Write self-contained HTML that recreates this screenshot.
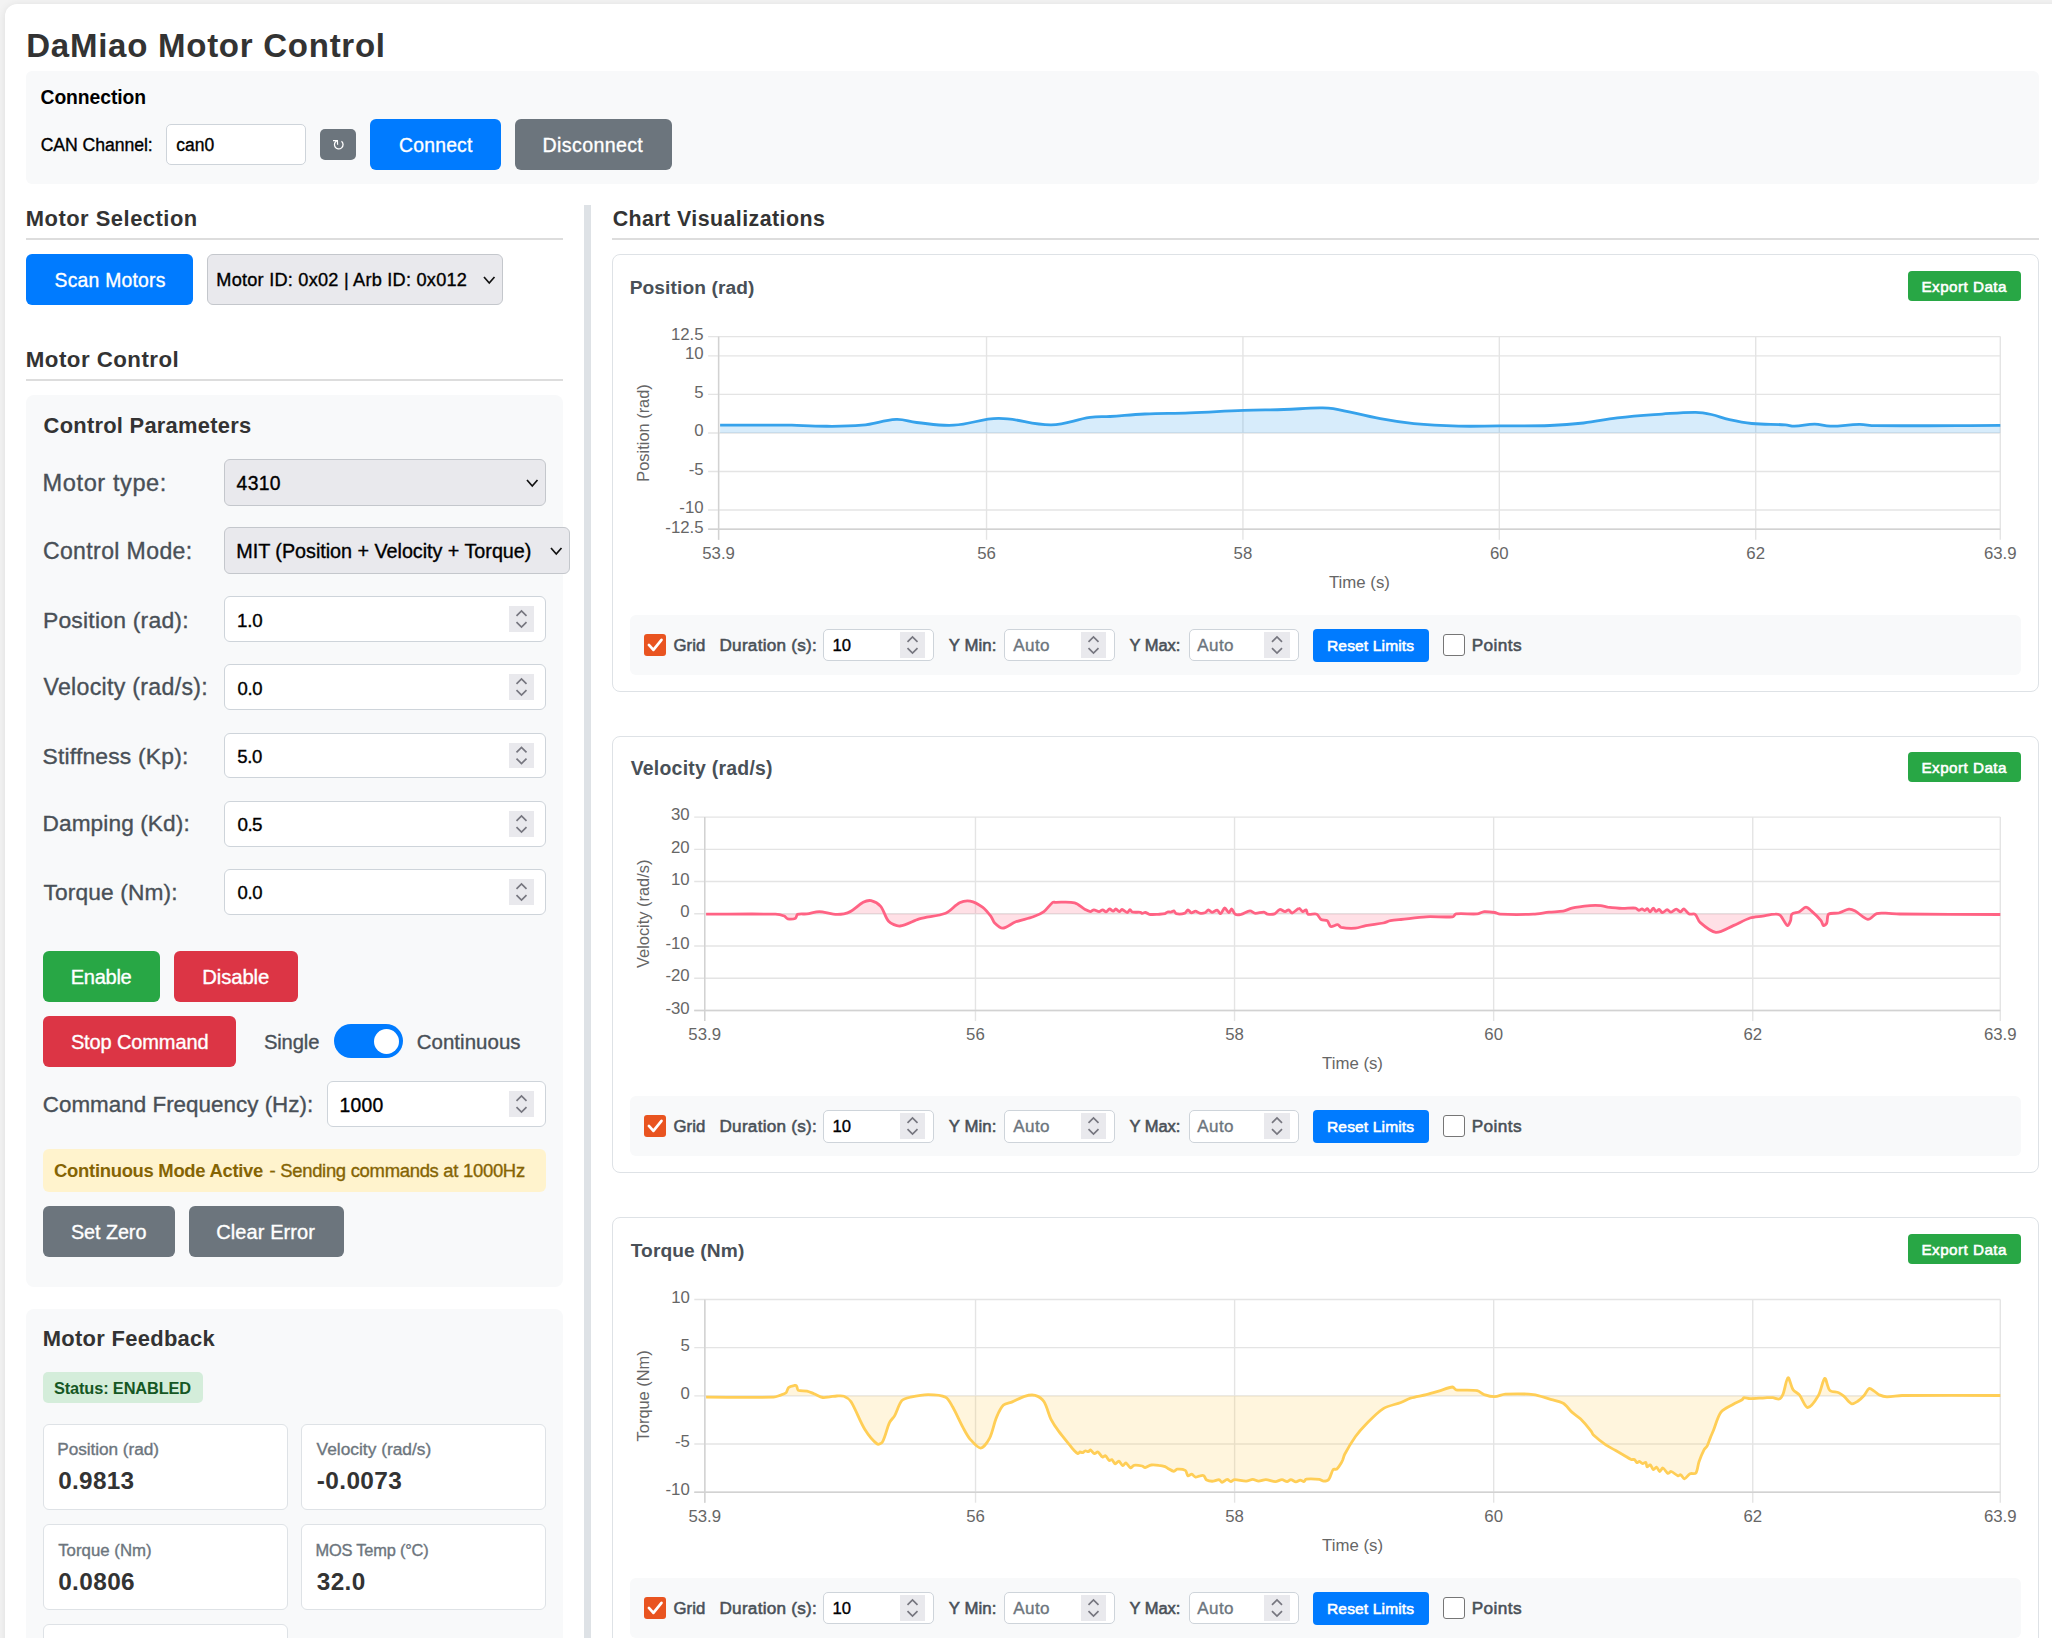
<!DOCTYPE html>
<html><head><meta charset="utf-8"><title>DaMiao Motor Control</title>
<style>
html,body{margin:0;padding:0;width:2052px;height:1638px;overflow:hidden;background:#f3f3f3;font-family:"Liberation Sans",sans-serif}
.a{position:absolute;box-sizing:border-box}
.t{position:absolute;white-space:nowrap;line-height:1}
.t.n{-webkit-text-stroke:0.35px currentColor}
.t.m{-webkit-text-stroke:0.55px currentColor}
</style></head><body>
<div class="a" style="left:5px;top:4px;width:2195.00px;height:1796.00px;background:#fff;border-radius:12px;box-shadow:0 1px 8px rgba(0,0,0,.09)"></div>
<div class="a" style="left:26px;top:71px;width:2013.00px;height:113.00px;background:#f8f9fa;border-radius:6px"></div>
<div class="a" style="left:166px;top:124px;width:140.00px;height:41.00px;background:#fff;border:1px solid #ced4da;border-radius:5px"></div>
<div class="a" style="left:320px;top:129px;width:36.00px;height:31.00px;background:#6c757d;border-radius:5px"></div>
<svg class="a" style="left:320px;top:129px" width="36" height="31" viewBox="0 0 36 31"><path d="M21.5 12.3 A4.3 4.3 0 1 1 17.2 11.6" fill="none" stroke="#fff" stroke-width="1.3"/><path d="M13.0 11.6 L17.4 11.6 L17.6 15.8" fill="none" stroke="#fff" stroke-width="1.2"/></svg>
<div class="a" style="left:370px;top:119px;width:131.00px;height:51.00px;background:#007bff;border-radius:6px"></div>
<div class="a" style="left:515px;top:119px;width:157.00px;height:51.00px;background:#6c757d;border-radius:6px"></div>
<div class="a" style="left:26px;top:238px;width:537.00px;height:2.00px;background:#dddddd"></div>
<div class="a" style="left:26px;top:254px;width:167.00px;height:51.00px;background:#007bff;border-radius:6px"></div>
<div class="a" style="left:207px;top:254px;width:296.00px;height:51.00px;background:#e9e9ed;border:1px solid #c4c7cc;border-radius:6px"></div>
<svg class="a" style="left:482.25px;top:274.50px" width="14.5" height="10"><path d="M2 2 L7.25 8 L12.5 2" fill="none" stroke="#111" stroke-width="1.7"/></svg>
<div class="a" style="left:584px;top:205px;width:7.00px;height:1495.00px;background:#dee2e6"></div>
<div class="a" style="left:26px;top:379px;width:537.00px;height:2.00px;background:#dddddd"></div>
<div class="a" style="left:26px;top:395px;width:537.00px;height:892.00px;background:#f8f9fa;border-radius:8px"></div>
<div class="a" style="left:224px;top:459px;width:322.00px;height:47.00px;background:#e9e9ed;border:1px solid #c4c7cc;border-radius:6px"></div>
<svg class="a" style="left:525.25px;top:478.00px" width="14.5" height="10"><path d="M2 2 L7.25 8 L12.5 2" fill="none" stroke="#111" stroke-width="1.7"/></svg>
<div class="a" style="left:224px;top:527px;width:346.00px;height:47.00px;background:#e9e9ed;border:1px solid #c4c7cc;border-radius:6px"></div>
<svg class="a" style="left:549.25px;top:546.00px" width="14.5" height="10"><path d="M2 2 L7.25 8 L12.5 2" fill="none" stroke="#111" stroke-width="1.7"/></svg>
<div class="a" style="left:224px;top:596px;width:322.00px;height:46.00px;background:#fff;border:1px solid #ced4da;border-radius:6px"></div>
<div class="a" style="left:509px;top:606px;width:25.00px;height:26.00px;background:#e9e9ed"></div><svg class="a" style="left:509px;top:606px" width="25.00" height="26.00"><path d="M7.50 9.80 L12.50 5.00 L17.50 9.80 M7.50 16.20 L12.50 21.00 L17.50 16.20" fill="none" stroke="#76767f" stroke-width="1.7"/></svg>
<div class="a" style="left:224px;top:664px;width:322.00px;height:46.00px;background:#fff;border:1px solid #ced4da;border-radius:6px"></div>
<div class="a" style="left:509px;top:674px;width:25.00px;height:26.00px;background:#e9e9ed"></div><svg class="a" style="left:509px;top:674px" width="25.00" height="26.00"><path d="M7.50 9.80 L12.50 5.00 L17.50 9.80 M7.50 16.20 L12.50 21.00 L17.50 16.20" fill="none" stroke="#76767f" stroke-width="1.7"/></svg>
<div class="a" style="left:224px;top:733px;width:322.00px;height:45.00px;background:#fff;border:1px solid #ced4da;border-radius:6px"></div>
<div class="a" style="left:509px;top:743px;width:25.00px;height:25.00px;background:#e9e9ed"></div><svg class="a" style="left:509px;top:743px" width="25.00" height="25.00"><path d="M7.50 9.30 L12.50 4.50 L17.50 9.30 M7.50 15.70 L12.50 20.50 L17.50 15.70" fill="none" stroke="#76767f" stroke-width="1.7"/></svg>
<div class="a" style="left:224px;top:801px;width:322.00px;height:46.00px;background:#fff;border:1px solid #ced4da;border-radius:6px"></div>
<div class="a" style="left:509px;top:811px;width:25.00px;height:26.00px;background:#e9e9ed"></div><svg class="a" style="left:509px;top:811px" width="25.00" height="26.00"><path d="M7.50 9.80 L12.50 5.00 L17.50 9.80 M7.50 16.20 L12.50 21.00 L17.50 16.20" fill="none" stroke="#76767f" stroke-width="1.7"/></svg>
<div class="a" style="left:224px;top:869px;width:322.00px;height:46.00px;background:#fff;border:1px solid #ced4da;border-radius:6px"></div>
<div class="a" style="left:509px;top:879px;width:25.00px;height:26.00px;background:#e9e9ed"></div><svg class="a" style="left:509px;top:879px" width="25.00" height="26.00"><path d="M7.50 9.80 L12.50 5.00 L17.50 9.80 M7.50 16.20 L12.50 21.00 L17.50 16.20" fill="none" stroke="#76767f" stroke-width="1.7"/></svg>
<div class="a" style="left:43px;top:951px;width:117.00px;height:51.00px;background:#28a745;border-radius:6px"></div>
<div class="a" style="left:174px;top:951px;width:124.00px;height:51.00px;background:#dc3545;border-radius:6px"></div>
<div class="a" style="left:43px;top:1016px;width:193.00px;height:51.00px;background:#dc3545;border-radius:6px"></div>
<div class="a" style="left:334px;top:1024px;width:69.00px;height:34.00px;background:#007bff;border-radius:17px"></div>
<div class="a" style="left:373.9px;top:1028.9px;width:25px;height:25px;border-radius:50%;background:#fff"></div>
<div class="a" style="left:327px;top:1081px;width:219.00px;height:46.00px;background:#fff;border:1px solid #ced4da;border-radius:6px"></div>
<div class="a" style="left:509px;top:1091px;width:25.00px;height:26.00px;background:#e9e9ed"></div><svg class="a" style="left:509px;top:1091px" width="25.00" height="26.00"><path d="M7.50 9.80 L12.50 5.00 L17.50 9.80 M7.50 16.20 L12.50 21.00 L17.50 16.20" fill="none" stroke="#76767f" stroke-width="1.7"/></svg>
<div class="a" style="left:43px;top:1149px;width:503.00px;height:43.00px;background:#fff3cd;border-radius:6px"></div>
<div class="a" style="left:43px;top:1206px;width:132.00px;height:51.00px;background:#6c757d;border-radius:6px"></div>
<div class="a" style="left:189px;top:1206px;width:155.00px;height:51.00px;background:#6c757d;border-radius:6px"></div>
<div class="a" style="left:26px;top:1309px;width:537.00px;height:491.00px;background:#f8f9fa;border-radius:8px"></div>
<div class="a" style="left:43px;top:1372px;width:160.00px;height:31.00px;background:#d4edda;border-radius:5px"></div>
<div class="a" style="left:43px;top:1424px;width:245.00px;height:85.50px;background:#fff;border:1px solid #dee2e6;border-radius:6px"></div>
<div class="a" style="left:301px;top:1424px;width:245.00px;height:85.50px;background:#fff;border:1px solid #dee2e6;border-radius:6px"></div>
<div class="a" style="left:43px;top:1524px;width:245.00px;height:85.50px;background:#fff;border:1px solid #dee2e6;border-radius:6px"></div>
<div class="a" style="left:301px;top:1524px;width:245.00px;height:85.50px;background:#fff;border:1px solid #dee2e6;border-radius:6px"></div>
<div class="a" style="left:43px;top:1624px;width:245.00px;height:85.50px;background:#fff;border:1px solid #dee2e6;border-radius:6px"></div>
<div class="a" style="left:612px;top:238px;width:1427.00px;height:2.00px;background:#dddddd"></div>
<div class="a" style="left:612px;top:254px;width:1427.00px;height:438.00px;background:#fff;border:1px solid #dee2e6;border-radius:8px"></div>
<div class="a" style="left:1908px;top:271px;width:113.00px;height:30.00px;background:#28a745;border-radius:4px"></div>
<div class="a" style="left:630px;top:615px;width:1391.00px;height:60.00px;background:#f8f9fa;border-radius:6px"></div>
<div class="a" style="left:644px;top:634px;width:22.00px;height:22.00px;background:#e95420;border-radius:3px"></div>
<svg class="a" style="left:644px;top:634px" width="22" height="22"><path d="M4.9 10.9 L9.4 15.9 L17.5 5.9" fill="none" stroke="#fff" stroke-width="2.7" stroke-linecap="round" stroke-linejoin="round"/></svg>
<div class="a" style="left:823px;top:629px;width:111.00px;height:32.00px;background:#fff;border:1px solid #ced4da;border-radius:5px"></div>
<div class="a" style="left:900px;top:632px;width:25.00px;height:26.00px;background:#e9e9ed"></div><svg class="a" style="left:900px;top:632px" width="25.00" height="26.00"><path d="M7.50 9.80 L12.50 5.00 L17.50 9.80 M7.50 16.20 L12.50 21.00 L17.50 16.20" fill="none" stroke="#76767f" stroke-width="1.7"/></svg>
<div class="a" style="left:1004px;top:629px;width:111.00px;height:32.00px;background:#fff;border:1px solid #ced4da;border-radius:5px"></div>
<div class="a" style="left:1081px;top:632px;width:25.00px;height:26.00px;background:#e9e9ed"></div><svg class="a" style="left:1081px;top:632px" width="25.00" height="26.00"><path d="M7.50 9.80 L12.50 5.00 L17.50 9.80 M7.50 16.20 L12.50 21.00 L17.50 16.20" fill="none" stroke="#76767f" stroke-width="1.7"/></svg>
<div class="a" style="left:1188.5px;top:629px;width:110.00px;height:32.00px;background:#fff;border:1px solid #ced4da;border-radius:5px"></div>
<div class="a" style="left:1264px;top:632px;width:26.00px;height:26.00px;background:#e9e9ed"></div><svg class="a" style="left:1264px;top:632px" width="26.00" height="26.00"><path d="M8.00 9.80 L13.00 5.00 L18.00 9.80 M8.00 16.20 L13.00 21.00 L18.00 16.20" fill="none" stroke="#76767f" stroke-width="1.7"/></svg>
<div class="a" style="left:1313px;top:629px;width:116.00px;height:33.00px;background:#007bff;border-radius:4px"></div>
<div class="a" style="left:1443px;top:634px;width:22.00px;height:22.00px;background:#fff;border:1px solid #767676;border-radius:3px"></div>
<div class="a" style="left:612px;top:736px;width:1427.00px;height:437.00px;background:#fff;border:1px solid #dee2e6;border-radius:8px"></div>
<div class="a" style="left:1908px;top:752px;width:113.00px;height:30.00px;background:#28a745;border-radius:4px"></div>
<div class="a" style="left:630px;top:1096px;width:1391.00px;height:60.00px;background:#f8f9fa;border-radius:6px"></div>
<div class="a" style="left:644px;top:1115px;width:22.00px;height:22.00px;background:#e95420;border-radius:3px"></div>
<svg class="a" style="left:644px;top:1115px" width="22" height="22"><path d="M4.9 10.9 L9.4 15.9 L17.5 5.9" fill="none" stroke="#fff" stroke-width="2.7" stroke-linecap="round" stroke-linejoin="round"/></svg>
<div class="a" style="left:823px;top:1110px;width:111.00px;height:33.00px;background:#fff;border:1px solid #ced4da;border-radius:5px"></div>
<div class="a" style="left:900px;top:1113px;width:25.00px;height:26.00px;background:#e9e9ed"></div><svg class="a" style="left:900px;top:1113px" width="25.00" height="26.00"><path d="M7.50 9.80 L12.50 5.00 L17.50 9.80 M7.50 16.20 L12.50 21.00 L17.50 16.20" fill="none" stroke="#76767f" stroke-width="1.7"/></svg>
<div class="a" style="left:1004px;top:1110px;width:111.00px;height:33.00px;background:#fff;border:1px solid #ced4da;border-radius:5px"></div>
<div class="a" style="left:1081px;top:1113px;width:25.00px;height:26.00px;background:#e9e9ed"></div><svg class="a" style="left:1081px;top:1113px" width="25.00" height="26.00"><path d="M7.50 9.80 L12.50 5.00 L17.50 9.80 M7.50 16.20 L12.50 21.00 L17.50 16.20" fill="none" stroke="#76767f" stroke-width="1.7"/></svg>
<div class="a" style="left:1188.5px;top:1110px;width:110.00px;height:33.00px;background:#fff;border:1px solid #ced4da;border-radius:5px"></div>
<div class="a" style="left:1264px;top:1113px;width:26.00px;height:26.00px;background:#e9e9ed"></div><svg class="a" style="left:1264px;top:1113px" width="26.00" height="26.00"><path d="M8.00 9.80 L13.00 5.00 L18.00 9.80 M8.00 16.20 L13.00 21.00 L18.00 16.20" fill="none" stroke="#76767f" stroke-width="1.7"/></svg>
<div class="a" style="left:1313px;top:1110px;width:116.00px;height:33.00px;background:#007bff;border-radius:4px"></div>
<div class="a" style="left:1443px;top:1115px;width:22.00px;height:22.00px;background:#fff;border:1px solid #767676;border-radius:3px"></div>
<div class="a" style="left:612px;top:1217px;width:1427.00px;height:438.00px;background:#fff;border:1px solid #dee2e6;border-radius:8px"></div>
<div class="a" style="left:1908px;top:1234px;width:113.00px;height:30.00px;background:#28a745;border-radius:4px"></div>
<div class="a" style="left:630px;top:1578px;width:1391.00px;height:60.00px;background:#f8f9fa;border-radius:6px"></div>
<div class="a" style="left:644px;top:1597px;width:22.00px;height:22.00px;background:#e95420;border-radius:3px"></div>
<svg class="a" style="left:644px;top:1597px" width="22" height="22"><path d="M4.9 10.9 L9.4 15.9 L17.5 5.9" fill="none" stroke="#fff" stroke-width="2.7" stroke-linecap="round" stroke-linejoin="round"/></svg>
<div class="a" style="left:823px;top:1592px;width:111.00px;height:32.00px;background:#fff;border:1px solid #ced4da;border-radius:5px"></div>
<div class="a" style="left:900px;top:1595px;width:25.00px;height:26.00px;background:#e9e9ed"></div><svg class="a" style="left:900px;top:1595px" width="25.00" height="26.00"><path d="M7.50 9.80 L12.50 5.00 L17.50 9.80 M7.50 16.20 L12.50 21.00 L17.50 16.20" fill="none" stroke="#76767f" stroke-width="1.7"/></svg>
<div class="a" style="left:1004px;top:1592px;width:111.00px;height:32.00px;background:#fff;border:1px solid #ced4da;border-radius:5px"></div>
<div class="a" style="left:1081px;top:1595px;width:25.00px;height:26.00px;background:#e9e9ed"></div><svg class="a" style="left:1081px;top:1595px" width="25.00" height="26.00"><path d="M7.50 9.80 L12.50 5.00 L17.50 9.80 M7.50 16.20 L12.50 21.00 L17.50 16.20" fill="none" stroke="#76767f" stroke-width="1.7"/></svg>
<div class="a" style="left:1188.5px;top:1592px;width:110.00px;height:32.00px;background:#fff;border:1px solid #ced4da;border-radius:5px"></div>
<div class="a" style="left:1264px;top:1595px;width:26.00px;height:26.00px;background:#e9e9ed"></div><svg class="a" style="left:1264px;top:1595px" width="26.00" height="26.00"><path d="M8.00 9.80 L13.00 5.00 L18.00 9.80 M8.00 16.20 L13.00 21.00 L18.00 16.20" fill="none" stroke="#76767f" stroke-width="1.7"/></svg>
<div class="a" style="left:1313px;top:1592px;width:116.00px;height:33.00px;background:#007bff;border-radius:4px"></div>
<div class="a" style="left:1443px;top:1597px;width:22.00px;height:22.00px;background:#fff;border:1px solid #767676;border-radius:3px"></div>
<div class="t" style="left:26.30px;top:28.81px;font-size:33.00px;font-weight:bold;color:#333333;letter-spacing:0.742px">DaMiao Motor Control</div>
<div class="t" style="left:40.50px;top:87.90px;font-size:19.31px;font-weight:bold;color:#000000;letter-spacing:-0.060px">Connection</div>
<div class="t n" style="left:40.70px;top:136.70px;font-size:17.64px;font-weight:normal;color:#000000;letter-spacing:-0.060px">CAN Channel:</div>
<div class="t n" style="left:176.20px;top:136.71px;font-size:17.47px;font-weight:normal;color:#000000;letter-spacing:0.053px">can0</div>
<div class="t n" style="left:399.00px;top:135.80px;font-size:19.33px;font-weight:normal;color:#ffffff;letter-spacing:0.230px">Connect</div>
<div class="t n" style="left:542.60px;top:135.81px;font-size:19.60px;font-weight:normal;color:#ffffff;letter-spacing:0.366px">Disconnect</div>
<div class="t" style="left:25.80px;top:208.01px;font-size:21.92px;font-weight:bold;color:#333333;letter-spacing:0.505px">Motor Selection</div>
<div class="t n" style="left:54.60px;top:270.81px;font-size:19.35px;font-weight:normal;color:#ffffff;letter-spacing:0.219px">Scan Motors</div>
<div class="t n" style="left:216.30px;top:270.51px;font-size:18.15px;font-weight:normal;color:#000000;letter-spacing:0.238px">Motor ID: 0x02 | Arb ID: 0x012</div>
<div class="t" style="left:612.70px;top:208.71px;font-size:21.40px;font-weight:bold;color:#333333;letter-spacing:0.425px">Chart Visualizations</div>
<div class="t" style="left:25.80px;top:349.30px;font-size:22.30px;font-weight:bold;color:#333333;letter-spacing:0.460px">Motor Control</div>
<div class="t" style="left:43.60px;top:415.01px;font-size:21.90px;font-weight:bold;color:#333333;letter-spacing:0.254px">Control Parameters</div>
<div class="t n" style="left:42.60px;top:471.81px;font-size:23.58px;font-weight:normal;color:#495057;letter-spacing:0.579px">Motor type:</div>
<div class="t n" style="left:236.60px;top:474.31px;font-size:19.35px;font-weight:normal;color:#000000;letter-spacing:0.275px">4310</div>
<div class="t n" style="left:42.90px;top:539.70px;font-size:23.05px;font-weight:normal;color:#495057;letter-spacing:0.379px">Control Mode:</div>
<div class="t n" style="left:236.30px;top:542.31px;font-size:19.77px;font-weight:normal;color:#000000;letter-spacing:-0.025px">MIT (Position + Velocity + Torque)</div>
<div class="t n" style="left:42.90px;top:608.50px;font-size:22.95px;font-weight:normal;color:#495057;letter-spacing:0.207px">Position (rad):</div>
<div class="t n" style="left:236.90px;top:611.80px;font-size:18.74px;font-weight:normal;color:#000000;letter-spacing:-0.112px">1.0</div>
<div class="t n" style="left:43.50px;top:675.91px;font-size:23.15px;font-weight:normal;color:#495057;letter-spacing:0.298px">Velocity (rad/s):</div>
<div class="t n" style="left:237.50px;top:679.81px;font-size:18.51px;font-weight:normal;color:#000000;letter-spacing:-0.364px">0.0</div>
<div class="t n" style="left:42.50px;top:744.51px;font-size:22.89px;font-weight:normal;color:#495057;letter-spacing:0.187px">Stiffness (Kp):</div>
<div class="t n" style="left:237.30px;top:747.81px;font-size:18.54px;font-weight:normal;color:#000000;letter-spacing:-0.327px">5.0</div>
<div class="t n" style="left:42.50px;top:812.40px;font-size:22.66px;font-weight:normal;color:#495057;letter-spacing:0.094px">Damping (Kd):</div>
<div class="t n" style="left:237.50px;top:815.81px;font-size:18.82px;font-weight:normal;color:#000000;letter-spacing:-0.538px">0.5</div>
<div class="t n" style="left:43.50px;top:880.51px;font-size:22.73px;font-weight:normal;color:#495057;letter-spacing:0.133px">Torque (Nm):</div>
<div class="t n" style="left:237.50px;top:883.81px;font-size:18.51px;font-weight:normal;color:#000000;letter-spacing:-0.364px">0.0</div>
<div class="t n" style="left:70.70px;top:967.32px;font-size:20.10px;font-weight:normal;color:#ffffff;letter-spacing:-0.298px">Enable</div>
<div class="t n" style="left:202.20px;top:967.30px;font-size:20.34px;font-weight:normal;color:#ffffff;letter-spacing:-0.115px">Disable</div>
<div class="t n" style="left:70.90px;top:1032.31px;font-size:20.04px;font-weight:normal;color:#ffffff;letter-spacing:-0.139px">Stop Command</div>
<div class="t n" style="left:263.90px;top:1032.31px;font-size:20.21px;font-weight:normal;color:#495057;letter-spacing:-0.118px">Single</div>
<div class="t n" style="left:416.70px;top:1031.80px;font-size:20.47px;font-weight:normal;color:#495057;letter-spacing:0.042px">Continuous</div>
<div class="t n" style="left:42.80px;top:1094.01px;font-size:22.39px;font-weight:normal;color:#495057;letter-spacing:0.027px">Command Frequency (Hz):</div>
<div class="t n" style="left:339.60px;top:1095.71px;font-size:19.33px;font-weight:normal;color:#000000;letter-spacing:0.259px">1000</div>
<div class="t" style="left:54.10px;top:1161.80px;font-size:18.46px;font-weight:bold;color:#856404;letter-spacing:-0.299px">Continuous Mode Active</div>
<div class="t n" style="left:269.50px;top:1161.81px;font-size:18.45px;font-weight:normal;color:#856404;letter-spacing:-0.288px">- Sending commands at 1000Hz</div>
<div class="t n" style="left:71.00px;top:1222.80px;font-size:19.75px;font-weight:normal;color:#ffffff;letter-spacing:-0.051px">Set Zero</div>
<div class="t n" style="left:216.30px;top:1221.81px;font-size:20.00px;font-weight:normal;color:#ffffff;letter-spacing:0.087px">Clear Error</div>
<div class="t" style="left:42.70px;top:1327.80px;font-size:21.95px;font-weight:bold;color:#333333;letter-spacing:0.299px">Motor Feedback</div>
<div class="t" style="left:54.00px;top:1379.91px;font-size:16.39px;font-weight:bold;color:#155724;letter-spacing:-0.148px">Status: ENABLED</div>
<div class="t n" style="left:57.20px;top:1440.81px;font-size:17.23px;font-weight:normal;color:#6c757d;letter-spacing:-0.043px">Position (rad)</div>
<div class="t" style="left:58.20px;top:1469.40px;font-size:24.30px;font-weight:bold;color:#333333;letter-spacing:0.308px">0.9813</div>
<div class="t n" style="left:316.60px;top:1440.81px;font-size:17.34px;font-weight:normal;color:#6c757d;letter-spacing:0.005px">Velocity (rad/s)</div>
<div class="t" style="left:316.80px;top:1469.41px;font-size:24.42px;font-weight:bold;color:#333333;letter-spacing:0.366px">-0.0073</div>
<div class="t n" style="left:58.20px;top:1542.51px;font-size:16.79px;font-weight:normal;color:#6c757d;letter-spacing:0.022px">Torque (Nm)</div>
<div class="t" style="left:58.20px;top:1569.90px;font-size:24.39px;font-weight:bold;color:#333333;letter-spacing:0.381px">0.0806</div>
<div class="t n" style="left:315.60px;top:1541.51px;font-size:16.40px;font-weight:normal;color:#6c757d;letter-spacing:-0.205px">MOS Temp (°C)</div>
<div class="t" style="left:316.80px;top:1569.92px;font-size:24.32px;font-weight:bold;color:#333333;letter-spacing:0.367px">32.0</div>
<div class="t" style="left:629.70px;top:277.61px;font-size:19.17px;font-weight:bold;color:#495057;letter-spacing:0.095px">Position (rad)</div>
<div class="t m" style="left:1921.50px;top:279.22px;font-size:15.26px;font-weight:normal;color:#ffffff;letter-spacing:0.446px">Export Data</div>
<div class="t m" style="left:673.40px;top:637.80px;font-size:16.74px;font-weight:normal;color:#495057;letter-spacing:0.098px">Grid</div>
<div class="t m" style="left:719.50px;top:636.81px;font-size:17.14px;font-weight:normal;color:#495057;letter-spacing:0.254px">Duration (s):</div>
<div class="t n" style="left:832.40px;top:637.81px;font-size:16.70px;font-weight:normal;color:#000000;letter-spacing:0.119px">10</div>
<div class="t m" style="left:948.80px;top:637.81px;font-size:16.75px;font-weight:normal;color:#495057;letter-spacing:0.077px">Y Min:</div>
<div class="t n" style="left:1013.20px;top:636.80px;font-size:17.10px;font-weight:normal;color:#6c757d;letter-spacing:0.422px">Auto</div>
<div class="t m" style="left:1129.50px;top:637.81px;font-size:16.53px;font-weight:normal;color:#495057;letter-spacing:-0.061px">Y Max:</div>
<div class="t n" style="left:1197.30px;top:636.81px;font-size:17.05px;font-weight:normal;color:#6c757d;letter-spacing:0.379px">Auto</div>
<div class="t m" style="left:1327.00px;top:638.21px;font-size:15.53px;font-weight:normal;color:#ffffff;letter-spacing:0.154px">Reset Limits</div>
<div class="t m" style="left:1471.70px;top:636.81px;font-size:17.25px;font-weight:normal;color:#495057;letter-spacing:0.404px">Points</div>
<div class="t" style="left:630.70px;top:758.80px;font-size:19.46px;font-weight:bold;color:#495057;letter-spacing:0.240px">Velocity (rad/s)</div>
<div class="t m" style="left:1921.50px;top:760.42px;font-size:15.26px;font-weight:normal;color:#ffffff;letter-spacing:0.446px">Export Data</div>
<div class="t m" style="left:673.40px;top:1119.00px;font-size:16.74px;font-weight:normal;color:#495057;letter-spacing:0.098px">Grid</div>
<div class="t m" style="left:719.50px;top:1118.00px;font-size:17.14px;font-weight:normal;color:#495057;letter-spacing:0.254px">Duration (s):</div>
<div class="t n" style="left:832.40px;top:1119.01px;font-size:16.70px;font-weight:normal;color:#000000;letter-spacing:0.119px">10</div>
<div class="t m" style="left:948.80px;top:1119.01px;font-size:16.75px;font-weight:normal;color:#495057;letter-spacing:0.077px">Y Min:</div>
<div class="t n" style="left:1013.20px;top:1118.01px;font-size:17.10px;font-weight:normal;color:#6c757d;letter-spacing:0.422px">Auto</div>
<div class="t m" style="left:1129.50px;top:1119.01px;font-size:16.53px;font-weight:normal;color:#495057;letter-spacing:-0.061px">Y Max:</div>
<div class="t n" style="left:1197.30px;top:1118.01px;font-size:17.05px;font-weight:normal;color:#6c757d;letter-spacing:0.379px">Auto</div>
<div class="t m" style="left:1327.00px;top:1119.40px;font-size:15.53px;font-weight:normal;color:#ffffff;letter-spacing:0.154px">Reset Limits</div>
<div class="t m" style="left:1471.70px;top:1118.01px;font-size:17.25px;font-weight:normal;color:#495057;letter-spacing:0.404px">Points</div>
<div class="t" style="left:630.70px;top:1240.61px;font-size:19.17px;font-weight:bold;color:#495057;letter-spacing:0.114px">Torque (Nm)</div>
<div class="t m" style="left:1921.50px;top:1242.22px;font-size:15.26px;font-weight:normal;color:#ffffff;letter-spacing:0.446px">Export Data</div>
<div class="t m" style="left:673.40px;top:1600.80px;font-size:16.74px;font-weight:normal;color:#495057;letter-spacing:0.098px">Grid</div>
<div class="t m" style="left:719.50px;top:1599.81px;font-size:17.14px;font-weight:normal;color:#495057;letter-spacing:0.254px">Duration (s):</div>
<div class="t n" style="left:832.40px;top:1600.81px;font-size:16.70px;font-weight:normal;color:#000000;letter-spacing:0.119px">10</div>
<div class="t m" style="left:948.80px;top:1600.81px;font-size:16.75px;font-weight:normal;color:#495057;letter-spacing:0.077px">Y Min:</div>
<div class="t n" style="left:1013.20px;top:1599.80px;font-size:17.10px;font-weight:normal;color:#6c757d;letter-spacing:0.422px">Auto</div>
<div class="t m" style="left:1129.50px;top:1600.81px;font-size:16.53px;font-weight:normal;color:#495057;letter-spacing:-0.061px">Y Max:</div>
<div class="t n" style="left:1197.30px;top:1599.81px;font-size:17.05px;font-weight:normal;color:#6c757d;letter-spacing:0.379px">Auto</div>
<div class="t m" style="left:1327.00px;top:1601.21px;font-size:15.53px;font-weight:normal;color:#ffffff;letter-spacing:0.154px">Reset Limits</div>
<div class="t m" style="left:1471.70px;top:1599.81px;font-size:17.25px;font-weight:normal;color:#495057;letter-spacing:0.404px">Points</div>
<svg class="a" style="left:0;top:0" width="2052" height="1638" viewBox="0 0 2052 1638" font-family="Liberation Sans, sans-serif">
<line x1="708.10" y1="336.60" x2="2000.30" y2="336.60" stroke="#e4e4e4" stroke-width="1.4"/>
<text x="703.60" y="339.80" font-size="16.8" fill="#666" text-anchor="end">12.5</text>
<line x1="708.10" y1="355.87" x2="2000.30" y2="355.87" stroke="#e4e4e4" stroke-width="1.4"/>
<text x="703.60" y="359.07" font-size="16.8" fill="#666" text-anchor="end">10</text>
<line x1="708.10" y1="394.41" x2="2000.30" y2="394.41" stroke="#e4e4e4" stroke-width="1.4"/>
<text x="703.60" y="397.61" font-size="16.8" fill="#666" text-anchor="end">5</text>
<line x1="708.10" y1="432.95" x2="2000.30" y2="432.95" stroke="#e4e4e4" stroke-width="1.4"/>
<text x="703.60" y="436.15" font-size="16.8" fill="#666" text-anchor="end">0</text>
<line x1="708.10" y1="471.49" x2="2000.30" y2="471.49" stroke="#e4e4e4" stroke-width="1.4"/>
<text x="703.60" y="474.69" font-size="16.8" fill="#666" text-anchor="end">-5</text>
<line x1="708.10" y1="510.03" x2="2000.30" y2="510.03" stroke="#e4e4e4" stroke-width="1.4"/>
<text x="703.60" y="513.23" font-size="16.8" fill="#666" text-anchor="end">-10</text>
<line x1="708.10" y1="529.30" x2="2000.30" y2="529.30" stroke="#e4e4e4" stroke-width="1.4"/>
<text x="703.60" y="532.50" font-size="16.8" fill="#666" text-anchor="end">-12.5</text>
<line x1="718.60" y1="336.60" x2="718.60" y2="539.80" stroke="#e4e4e4" stroke-width="1.4"/>
<text x="718.60" y="558.80" font-size="16.8" fill="#666" text-anchor="middle">53.9</text>
<line x1="986.53" y1="336.60" x2="986.53" y2="539.80" stroke="#e4e4e4" stroke-width="1.4"/>
<text x="986.53" y="558.80" font-size="16.8" fill="#666" text-anchor="middle">56</text>
<line x1="1242.92" y1="336.60" x2="1242.92" y2="539.80" stroke="#e4e4e4" stroke-width="1.4"/>
<text x="1242.92" y="558.80" font-size="16.8" fill="#666" text-anchor="middle">58</text>
<line x1="1499.31" y1="336.60" x2="1499.31" y2="539.80" stroke="#e4e4e4" stroke-width="1.4"/>
<text x="1499.31" y="558.80" font-size="16.8" fill="#666" text-anchor="middle">60</text>
<line x1="1755.70" y1="336.60" x2="1755.70" y2="539.80" stroke="#e4e4e4" stroke-width="1.4"/>
<text x="1755.70" y="558.80" font-size="16.8" fill="#666" text-anchor="middle">62</text>
<line x1="2000.30" y1="336.60" x2="2000.30" y2="539.80" stroke="#e4e4e4" stroke-width="1.4"/>
<text x="2000.30" y="558.80" font-size="16.8" fill="#666" text-anchor="middle">63.9</text>
<line x1="718.60" y1="336.60" x2="718.60" y2="539.80" stroke="#d2d2d2" stroke-width="1.4"/>
<line x1="708.10" y1="529.30" x2="2000.30" y2="529.30" stroke="#d2d2d2" stroke-width="1.4"/>
<text x="1359.45" y="588.10" font-size="16.8" fill="#666" text-anchor="middle">Time (s)</text>
<text transform="translate(648.8 432.95) rotate(-90)" x="0" y="0" font-size="16.4" fill="#666" text-anchor="middle">Position (rad)</text>
<path d="M720.1 425.2 C748.8 425.2 763.2 424.9 791.9 425.2 C801.3 425.3 805.9 426.2 815.3 426.2 C834.0 426.2 843.4 426.8 862.0 425.2 C875.8 424.0 882.5 420.1 896.2 419.4 C904.3 419.0 908.4 421.7 916.6 422.5 C931.4 424.0 938.9 425.9 953.7 425.2 C971.7 424.3 980.5 418.5 998.5 418.4 C1019.5 418.3 1030.2 425.0 1051.1 424.8 C1066.8 424.6 1074.4 419.6 1090.1 417.4 C1098.0 416.3 1102.0 417.0 1110.0 416.5 C1123.9 415.6 1130.9 414.6 1144.8 414.0 C1162.7 413.2 1171.7 413.6 1189.7 412.9 C1211.2 412.1 1222.0 411.2 1243.5 410.4 C1259.7 409.8 1267.7 410.0 1283.9 409.5 C1298.2 409.0 1305.4 408.2 1319.7 407.9 C1325.1 407.8 1327.9 407.7 1333.2 408.6 C1352.1 412.0 1361.4 415.2 1380.3 418.7 C1393.6 421.2 1400.4 422.3 1413.9 423.6 C1431.8 425.3 1440.8 425.6 1458.7 426.1 C1474.8 426.5 1482.9 426.0 1499.1 425.9 C1519.5 425.8 1529.7 426.2 1550.0 425.5 C1563.5 425.0 1570.2 424.5 1583.6 423.0 C1597.1 421.5 1603.8 419.4 1617.3 417.9 C1635.2 415.9 1644.2 415.4 1662.1 414.1 C1675.5 413.1 1682.3 412.2 1695.7 412.3 C1702.0 412.4 1705.2 413.1 1711.4 414.5 C1718.7 416.1 1722.1 418.1 1729.4 419.7 C1738.3 421.7 1742.8 422.7 1751.8 423.5 C1765.2 424.7 1772.0 424.0 1785.4 424.8 C1789.0 425.0 1790.8 426.3 1794.4 426.2 C1802.5 426.0 1806.5 424.1 1814.6 424.1 C1820.9 424.1 1824.0 426.2 1830.3 426.2 C1841.9 426.3 1847.8 424.5 1859.4 424.4 C1865.7 424.3 1868.8 425.7 1875.1 425.7 C1925.2 426.0 1950.2 425.5 2000.3 425.3 L2000.3 432.9 L720.1 432.9 Z" fill="rgba(54,162,235,0.2)" stroke="none"/>
<path d="M720.1 425.2 C748.8 425.2 763.2 424.9 791.9 425.2 C801.3 425.3 805.9 426.2 815.3 426.2 C834.0 426.2 843.4 426.8 862.0 425.2 C875.8 424.0 882.5 420.1 896.2 419.4 C904.3 419.0 908.4 421.7 916.6 422.5 C931.4 424.0 938.9 425.9 953.7 425.2 C971.7 424.3 980.5 418.5 998.5 418.4 C1019.5 418.3 1030.2 425.0 1051.1 424.8 C1066.8 424.6 1074.4 419.6 1090.1 417.4 C1098.0 416.3 1102.0 417.0 1110.0 416.5 C1123.9 415.6 1130.9 414.6 1144.8 414.0 C1162.7 413.2 1171.7 413.6 1189.7 412.9 C1211.2 412.1 1222.0 411.2 1243.5 410.4 C1259.7 409.8 1267.7 410.0 1283.9 409.5 C1298.2 409.0 1305.4 408.2 1319.7 407.9 C1325.1 407.8 1327.9 407.7 1333.2 408.6 C1352.1 412.0 1361.4 415.2 1380.3 418.7 C1393.6 421.2 1400.4 422.3 1413.9 423.6 C1431.8 425.3 1440.8 425.6 1458.7 426.1 C1474.8 426.5 1482.9 426.0 1499.1 425.9 C1519.5 425.8 1529.7 426.2 1550.0 425.5 C1563.5 425.0 1570.2 424.5 1583.6 423.0 C1597.1 421.5 1603.8 419.4 1617.3 417.9 C1635.2 415.9 1644.2 415.4 1662.1 414.1 C1675.5 413.1 1682.3 412.2 1695.7 412.3 C1702.0 412.4 1705.2 413.1 1711.4 414.5 C1718.7 416.1 1722.1 418.1 1729.4 419.7 C1738.3 421.7 1742.8 422.7 1751.8 423.5 C1765.2 424.7 1772.0 424.0 1785.4 424.8 C1789.0 425.0 1790.8 426.3 1794.4 426.2 C1802.5 426.0 1806.5 424.1 1814.6 424.1 C1820.9 424.1 1824.0 426.2 1830.3 426.2 C1841.9 426.3 1847.8 424.5 1859.4 424.4 C1865.7 424.3 1868.8 425.7 1875.1 425.7 C1925.2 426.0 1950.2 425.5 2000.3 425.3" fill="none" stroke="#36a2eb" stroke-width="2.8" stroke-linejoin="round" stroke-linecap="butt"/>
<line x1="694.20" y1="817.10" x2="2000.30" y2="817.10" stroke="#e4e4e4" stroke-width="1.4"/>
<text x="689.70" y="820.30" font-size="16.8" fill="#666" text-anchor="end">30</text>
<line x1="694.20" y1="849.33" x2="2000.30" y2="849.33" stroke="#e4e4e4" stroke-width="1.4"/>
<text x="689.70" y="852.53" font-size="16.8" fill="#666" text-anchor="end">20</text>
<line x1="694.20" y1="881.57" x2="2000.30" y2="881.57" stroke="#e4e4e4" stroke-width="1.4"/>
<text x="689.70" y="884.77" font-size="16.8" fill="#666" text-anchor="end">10</text>
<line x1="694.20" y1="913.80" x2="2000.30" y2="913.80" stroke="#e4e4e4" stroke-width="1.4"/>
<text x="689.70" y="917.00" font-size="16.8" fill="#666" text-anchor="end">0</text>
<line x1="694.20" y1="946.03" x2="2000.30" y2="946.03" stroke="#e4e4e4" stroke-width="1.4"/>
<text x="689.70" y="949.23" font-size="16.8" fill="#666" text-anchor="end">-10</text>
<line x1="694.20" y1="978.27" x2="2000.30" y2="978.27" stroke="#e4e4e4" stroke-width="1.4"/>
<text x="689.70" y="981.47" font-size="16.8" fill="#666" text-anchor="end">-20</text>
<line x1="694.20" y1="1010.50" x2="2000.30" y2="1010.50" stroke="#e4e4e4" stroke-width="1.4"/>
<text x="689.70" y="1013.70" font-size="16.8" fill="#666" text-anchor="end">-30</text>
<line x1="704.70" y1="817.10" x2="704.70" y2="1021.00" stroke="#e4e4e4" stroke-width="1.4"/>
<text x="704.70" y="1040.00" font-size="16.8" fill="#666" text-anchor="middle">53.9</text>
<line x1="975.45" y1="817.10" x2="975.45" y2="1021.00" stroke="#e4e4e4" stroke-width="1.4"/>
<text x="975.45" y="1040.00" font-size="16.8" fill="#666" text-anchor="middle">56</text>
<line x1="1234.55" y1="817.10" x2="1234.55" y2="1021.00" stroke="#e4e4e4" stroke-width="1.4"/>
<text x="1234.55" y="1040.00" font-size="16.8" fill="#666" text-anchor="middle">58</text>
<line x1="1493.64" y1="817.10" x2="1493.64" y2="1021.00" stroke="#e4e4e4" stroke-width="1.4"/>
<text x="1493.64" y="1040.00" font-size="16.8" fill="#666" text-anchor="middle">60</text>
<line x1="1752.74" y1="817.10" x2="1752.74" y2="1021.00" stroke="#e4e4e4" stroke-width="1.4"/>
<text x="1752.74" y="1040.00" font-size="16.8" fill="#666" text-anchor="middle">62</text>
<line x1="2000.30" y1="817.10" x2="2000.30" y2="1021.00" stroke="#e4e4e4" stroke-width="1.4"/>
<text x="2000.30" y="1040.00" font-size="16.8" fill="#666" text-anchor="middle">63.9</text>
<line x1="704.70" y1="817.10" x2="704.70" y2="1021.00" stroke="#d2d2d2" stroke-width="1.4"/>
<line x1="694.20" y1="1010.50" x2="2000.30" y2="1010.50" stroke="#d2d2d2" stroke-width="1.4"/>
<text x="1352.50" y="1069.30" font-size="16.8" fill="#666" text-anchor="middle">Time (s)</text>
<text transform="translate(648.8 913.80) rotate(-90)" x="0" y="0" font-size="16.4" fill="#666" text-anchor="middle">Velocity (rad/s)</text>
<path d="M706.1 914.2 C726.9 914.2 754.7 913.7 775.4 914.2 C778.1 914.3 781.7 915.1 784.2 916.0 C785.4 916.5 786.5 918.7 787.7 918.9 C789.9 919.3 793.7 919.1 795.6 918.2 C796.6 917.7 796.4 914.8 797.4 914.4 C799.8 913.5 804.1 914.3 807.0 913.9 C810.7 913.4 815.6 911.6 819.3 911.6 C823.5 911.6 829.1 913.8 833.3 914.2 C836.5 914.5 840.8 914.4 843.9 913.9 C846.1 913.5 849.0 912.4 850.9 911.2 C854.8 908.9 859.2 904.4 863.2 902.3 C865.3 901.2 868.9 900.2 871.1 900.7 C874.1 901.4 878.6 903.9 880.7 906.3 C883.9 910.0 885.3 917.8 888.6 921.2 C891.0 923.7 896.5 926.3 900.0 926.0 C905.8 925.6 913.4 920.6 919.3 918.9 C927.1 916.7 938.3 916.2 945.6 913.3 C950.4 911.4 955.0 905.1 959.6 902.8 C962.4 901.4 967.2 900.5 970.2 901.1 C974.1 901.8 979.3 904.8 982.5 907.2 C985.6 909.5 988.8 913.7 991.2 916.8 C992.5 918.5 993.2 921.5 994.7 923.0 C996.7 925.0 1000.1 928.3 1002.6 928.2 C1006.4 928.0 1011.7 923.3 1015.8 921.8 C1020.9 919.9 1028.2 918.7 1033.3 916.8 C1036.6 915.6 1041.1 913.7 1043.9 911.6 C1046.9 909.4 1049.8 904.8 1052.6 902.5 C1053.2 902.0 1054.5 902.3 1055.3 902.3 C1061.1 902.4 1069.2 901.5 1074.6 902.8 C1078.1 903.6 1081.8 907.7 1085.1 909.5 C1086.6 910.3 1088.8 911.5 1090.4 911.6 C1091.5 911.6 1092.8 909.8 1093.9 909.8 C1095.4 909.8 1097.6 911.6 1099.1 911.6 C1100.2 911.6 1101.6 909.8 1102.6 909.8 C1103.7 909.8 1105.1 912.0 1106.1 911.9 C1107.2 911.8 1108.5 909.1 1109.6 909.0 C1110.6 908.9 1112.2 911.2 1113.2 911.2 C1114.0 911.2 1115.0 908.9 1115.8 909.0 C1116.8 909.1 1118.3 911.5 1119.3 911.6 C1120.1 911.7 1121.1 909.4 1121.9 909.5 C1123.4 909.7 1125.7 912.5 1127.2 912.5 C1128.2 912.5 1129.2 909.7 1130.0 909.6 C1130.7 909.5 1131.4 911.8 1132.3 912.0 C1134.5 912.6 1138.1 912.0 1140.5 912.3 C1141.1 912.4 1141.7 913.4 1142.3 913.4 C1143.1 913.4 1144.4 912.2 1145.2 912.3 C1146.5 912.5 1148.0 914.1 1149.3 914.3 C1151.8 914.7 1155.5 914.4 1158.1 914.3 C1160.2 914.2 1163.1 914.2 1165.1 913.7 C1165.9 913.5 1166.6 912.2 1167.4 912.0 C1168.4 911.7 1169.9 912.2 1170.9 912.0 C1171.8 911.8 1173.2 910.6 1173.9 910.8 C1174.7 911.1 1175.2 913.5 1176.2 913.7 C1178.5 914.2 1182.6 913.9 1185.0 913.1 C1186.2 912.7 1187.0 909.9 1187.9 909.9 C1188.9 909.9 1190.2 912.6 1191.4 912.8 C1192.5 913.0 1194.3 911.1 1195.5 911.1 C1196.7 911.1 1198.3 912.9 1199.6 913.1 C1201.1 913.4 1203.5 913.3 1204.9 912.8 C1206.1 912.4 1207.3 910.0 1208.4 909.9 C1209.4 909.8 1210.8 912.3 1211.9 912.3 C1213.4 912.4 1215.7 910.0 1217.1 910.2 C1218.3 910.4 1219.7 914.0 1220.6 913.7 C1221.9 913.3 1223.4 908.1 1224.7 907.9 C1225.8 907.7 1227.6 912.3 1228.8 912.5 C1229.7 912.6 1231.0 908.8 1231.8 909.0 C1232.9 909.3 1233.8 913.5 1235.3 914.3 C1236.6 915.1 1239.4 914.7 1241.1 914.3 C1243.8 913.6 1247.4 911.0 1250.0 910.8 C1251.6 910.7 1253.6 913.1 1255.3 913.3 C1257.8 913.5 1261.5 911.9 1264.0 912.1 C1265.2 912.2 1266.3 914.0 1267.5 914.2 C1269.5 914.5 1272.7 914.6 1274.6 913.9 C1276.4 913.2 1278.1 909.9 1279.8 909.5 C1281.2 909.2 1283.5 911.5 1285.1 911.6 C1286.2 911.6 1287.6 909.6 1288.6 909.8 C1289.7 910.0 1291.0 913.2 1292.1 913.0 C1294.1 912.7 1297.1 908.7 1299.1 908.4 C1300.2 908.2 1301.5 911.4 1302.6 911.6 C1303.6 911.8 1305.4 909.4 1306.1 909.8 C1307.0 910.2 1306.8 913.7 1307.9 914.2 C1310.0 915.1 1314.5 913.3 1316.7 914.2 C1318.4 914.9 1319.4 918.5 1321.1 919.5 C1322.6 920.4 1325.8 919.7 1327.2 920.7 C1328.7 921.8 1329.2 925.9 1330.7 926.5 C1332.3 927.1 1335.7 924.5 1337.7 924.7 C1338.9 924.8 1339.9 927.1 1341.2 927.4 C1345.2 928.2 1351.1 928.5 1355.3 928.2 C1358.5 928.0 1362.6 926.2 1365.8 925.6 C1371.0 924.6 1378.1 924.0 1383.3 923.0 C1385.5 922.6 1388.2 921.1 1390.4 920.7 C1393.5 920.1 1397.7 919.8 1400.9 919.5 C1408.5 918.7 1418.7 917.2 1426.3 916.8 C1434.2 916.4 1445.0 917.5 1452.6 916.8 C1453.9 916.7 1454.8 914.1 1456.1 913.9 C1462.2 913.2 1471.0 914.4 1477.2 913.9 C1479.4 913.7 1482.0 911.8 1484.2 911.6 C1487.3 911.4 1491.6 912.0 1494.7 912.5 C1496.3 912.8 1498.3 914.1 1500.0 914.2 C1509.9 914.6 1523.3 914.6 1533.3 914.2 C1538.1 914.0 1544.3 912.6 1549.1 912.1 C1553.3 911.7 1559.1 911.9 1563.2 911.2 C1565.9 910.7 1569.2 908.7 1571.9 908.1 C1577.2 907.0 1584.6 906.2 1590.0 905.7 C1593.2 905.4 1597.5 905.4 1600.7 905.7 C1602.8 905.9 1605.6 906.8 1607.7 907.1 C1612.0 907.6 1617.8 908.2 1622.2 908.4 C1626.2 908.5 1631.7 907.7 1635.6 908.1 C1636.7 908.2 1637.8 910.2 1638.8 910.3 C1639.7 910.4 1641.1 908.9 1642.0 908.9 C1642.8 908.9 1643.9 910.5 1644.7 910.5 C1645.5 910.5 1646.7 908.5 1647.4 908.7 C1648.3 908.9 1649.3 912.0 1650.1 911.9 C1651.1 911.8 1652.3 908.2 1653.3 908.1 C1654.1 908.0 1655.1 911.2 1656.0 911.4 C1656.8 911.6 1658.3 909.3 1659.2 909.5 C1660.3 909.7 1661.3 912.7 1662.4 912.7 C1663.7 912.7 1665.8 909.8 1667.2 909.7 C1668.3 909.6 1669.8 912.3 1671.0 912.2 C1672.6 912.1 1674.7 909.2 1676.3 909.2 C1677.6 909.2 1679.4 911.9 1680.6 911.9 C1681.6 911.9 1682.8 908.7 1683.8 908.9 C1685.4 909.3 1687.3 913.1 1689.2 914.0 C1690.7 914.7 1693.8 913.3 1695.1 914.3 C1697.1 915.8 1697.9 920.5 1700.0 922.3 C1704.1 925.9 1710.8 931.8 1715.8 932.3 C1720.8 932.8 1728.1 927.8 1733.3 925.6 C1738.4 923.5 1744.8 919.7 1750.0 918.0 C1753.6 916.8 1758.9 916.7 1762.7 916.1 C1766.5 915.5 1771.5 914.3 1775.3 914.2 C1776.9 914.1 1779.3 914.5 1780.4 915.5 C1782.9 917.9 1785.3 924.6 1787.4 925.6 C1788.4 926.1 1790.0 922.2 1790.6 920.6 C1791.3 918.8 1790.6 915.4 1791.8 914.2 C1793.3 912.7 1797.3 912.8 1799.4 911.7 C1801.5 910.7 1803.9 907.4 1805.8 907.2 C1807.3 907.0 1809.5 909.2 1810.8 910.4 C1814.0 913.2 1818.3 917.3 1821.0 920.6 C1822.1 921.9 1822.5 925.2 1823.5 925.6 C1824.2 925.9 1826.2 924.2 1826.7 923.1 C1827.8 920.7 1826.9 915.6 1828.6 914.2 C1830.5 912.6 1835.8 913.7 1838.7 913.0 C1841.8 912.2 1845.8 909.6 1848.9 909.2 C1850.8 909.0 1853.5 910.2 1855.2 911.1 C1859.2 913.2 1864.1 918.9 1867.9 919.3 C1870.5 919.6 1873.8 914.6 1876.7 913.6 C1879.1 912.8 1882.9 913.2 1885.6 913.2 C1889.8 913.3 1895.4 914.0 1899.6 914.0 C1929.8 914.3 1970.1 914.4 2000.3 914.5 L2000.3 913.8 L706.1 913.8 Z" fill="rgba(255,99,132,0.2)" stroke="none"/>
<path d="M706.1 914.2 C726.9 914.2 754.7 913.7 775.4 914.2 C778.1 914.3 781.7 915.1 784.2 916.0 C785.4 916.5 786.5 918.7 787.7 918.9 C789.9 919.3 793.7 919.1 795.6 918.2 C796.6 917.7 796.4 914.8 797.4 914.4 C799.8 913.5 804.1 914.3 807.0 913.9 C810.7 913.4 815.6 911.6 819.3 911.6 C823.5 911.6 829.1 913.8 833.3 914.2 C836.5 914.5 840.8 914.4 843.9 913.9 C846.1 913.5 849.0 912.4 850.9 911.2 C854.8 908.9 859.2 904.4 863.2 902.3 C865.3 901.2 868.9 900.2 871.1 900.7 C874.1 901.4 878.6 903.9 880.7 906.3 C883.9 910.0 885.3 917.8 888.6 921.2 C891.0 923.7 896.5 926.3 900.0 926.0 C905.8 925.6 913.4 920.6 919.3 918.9 C927.1 916.7 938.3 916.2 945.6 913.3 C950.4 911.4 955.0 905.1 959.6 902.8 C962.4 901.4 967.2 900.5 970.2 901.1 C974.1 901.8 979.3 904.8 982.5 907.2 C985.6 909.5 988.8 913.7 991.2 916.8 C992.5 918.5 993.2 921.5 994.7 923.0 C996.7 925.0 1000.1 928.3 1002.6 928.2 C1006.4 928.0 1011.7 923.3 1015.8 921.8 C1020.9 919.9 1028.2 918.7 1033.3 916.8 C1036.6 915.6 1041.1 913.7 1043.9 911.6 C1046.9 909.4 1049.8 904.8 1052.6 902.5 C1053.2 902.0 1054.5 902.3 1055.3 902.3 C1061.1 902.4 1069.2 901.5 1074.6 902.8 C1078.1 903.6 1081.8 907.7 1085.1 909.5 C1086.6 910.3 1088.8 911.5 1090.4 911.6 C1091.5 911.6 1092.8 909.8 1093.9 909.8 C1095.4 909.8 1097.6 911.6 1099.1 911.6 C1100.2 911.6 1101.6 909.8 1102.6 909.8 C1103.7 909.8 1105.1 912.0 1106.1 911.9 C1107.2 911.8 1108.5 909.1 1109.6 909.0 C1110.6 908.9 1112.2 911.2 1113.2 911.2 C1114.0 911.2 1115.0 908.9 1115.8 909.0 C1116.8 909.1 1118.3 911.5 1119.3 911.6 C1120.1 911.7 1121.1 909.4 1121.9 909.5 C1123.4 909.7 1125.7 912.5 1127.2 912.5 C1128.2 912.5 1129.2 909.7 1130.0 909.6 C1130.7 909.5 1131.4 911.8 1132.3 912.0 C1134.5 912.6 1138.1 912.0 1140.5 912.3 C1141.1 912.4 1141.7 913.4 1142.3 913.4 C1143.1 913.4 1144.4 912.2 1145.2 912.3 C1146.5 912.5 1148.0 914.1 1149.3 914.3 C1151.8 914.7 1155.5 914.4 1158.1 914.3 C1160.2 914.2 1163.1 914.2 1165.1 913.7 C1165.9 913.5 1166.6 912.2 1167.4 912.0 C1168.4 911.7 1169.9 912.2 1170.9 912.0 C1171.8 911.8 1173.2 910.6 1173.9 910.8 C1174.7 911.1 1175.2 913.5 1176.2 913.7 C1178.5 914.2 1182.6 913.9 1185.0 913.1 C1186.2 912.7 1187.0 909.9 1187.9 909.9 C1188.9 909.9 1190.2 912.6 1191.4 912.8 C1192.5 913.0 1194.3 911.1 1195.5 911.1 C1196.7 911.1 1198.3 912.9 1199.6 913.1 C1201.1 913.4 1203.5 913.3 1204.9 912.8 C1206.1 912.4 1207.3 910.0 1208.4 909.9 C1209.4 909.8 1210.8 912.3 1211.9 912.3 C1213.4 912.4 1215.7 910.0 1217.1 910.2 C1218.3 910.4 1219.7 914.0 1220.6 913.7 C1221.9 913.3 1223.4 908.1 1224.7 907.9 C1225.8 907.7 1227.6 912.3 1228.8 912.5 C1229.7 912.6 1231.0 908.8 1231.8 909.0 C1232.9 909.3 1233.8 913.5 1235.3 914.3 C1236.6 915.1 1239.4 914.7 1241.1 914.3 C1243.8 913.6 1247.4 911.0 1250.0 910.8 C1251.6 910.7 1253.6 913.1 1255.3 913.3 C1257.8 913.5 1261.5 911.9 1264.0 912.1 C1265.2 912.2 1266.3 914.0 1267.5 914.2 C1269.5 914.5 1272.7 914.6 1274.6 913.9 C1276.4 913.2 1278.1 909.9 1279.8 909.5 C1281.2 909.2 1283.5 911.5 1285.1 911.6 C1286.2 911.6 1287.6 909.6 1288.6 909.8 C1289.7 910.0 1291.0 913.2 1292.1 913.0 C1294.1 912.7 1297.1 908.7 1299.1 908.4 C1300.2 908.2 1301.5 911.4 1302.6 911.6 C1303.6 911.8 1305.4 909.4 1306.1 909.8 C1307.0 910.2 1306.8 913.7 1307.9 914.2 C1310.0 915.1 1314.5 913.3 1316.7 914.2 C1318.4 914.9 1319.4 918.5 1321.1 919.5 C1322.6 920.4 1325.8 919.7 1327.2 920.7 C1328.7 921.8 1329.2 925.9 1330.7 926.5 C1332.3 927.1 1335.7 924.5 1337.7 924.7 C1338.9 924.8 1339.9 927.1 1341.2 927.4 C1345.2 928.2 1351.1 928.5 1355.3 928.2 C1358.5 928.0 1362.6 926.2 1365.8 925.6 C1371.0 924.6 1378.1 924.0 1383.3 923.0 C1385.5 922.6 1388.2 921.1 1390.4 920.7 C1393.5 920.1 1397.7 919.8 1400.9 919.5 C1408.5 918.7 1418.7 917.2 1426.3 916.8 C1434.2 916.4 1445.0 917.5 1452.6 916.8 C1453.9 916.7 1454.8 914.1 1456.1 913.9 C1462.2 913.2 1471.0 914.4 1477.2 913.9 C1479.4 913.7 1482.0 911.8 1484.2 911.6 C1487.3 911.4 1491.6 912.0 1494.7 912.5 C1496.3 912.8 1498.3 914.1 1500.0 914.2 C1509.9 914.6 1523.3 914.6 1533.3 914.2 C1538.1 914.0 1544.3 912.6 1549.1 912.1 C1553.3 911.7 1559.1 911.9 1563.2 911.2 C1565.9 910.7 1569.2 908.7 1571.9 908.1 C1577.2 907.0 1584.6 906.2 1590.0 905.7 C1593.2 905.4 1597.5 905.4 1600.7 905.7 C1602.8 905.9 1605.6 906.8 1607.7 907.1 C1612.0 907.6 1617.8 908.2 1622.2 908.4 C1626.2 908.5 1631.7 907.7 1635.6 908.1 C1636.7 908.2 1637.8 910.2 1638.8 910.3 C1639.7 910.4 1641.1 908.9 1642.0 908.9 C1642.8 908.9 1643.9 910.5 1644.7 910.5 C1645.5 910.5 1646.7 908.5 1647.4 908.7 C1648.3 908.9 1649.3 912.0 1650.1 911.9 C1651.1 911.8 1652.3 908.2 1653.3 908.1 C1654.1 908.0 1655.1 911.2 1656.0 911.4 C1656.8 911.6 1658.3 909.3 1659.2 909.5 C1660.3 909.7 1661.3 912.7 1662.4 912.7 C1663.7 912.7 1665.8 909.8 1667.2 909.7 C1668.3 909.6 1669.8 912.3 1671.0 912.2 C1672.6 912.1 1674.7 909.2 1676.3 909.2 C1677.6 909.2 1679.4 911.9 1680.6 911.9 C1681.6 911.9 1682.8 908.7 1683.8 908.9 C1685.4 909.3 1687.3 913.1 1689.2 914.0 C1690.7 914.7 1693.8 913.3 1695.1 914.3 C1697.1 915.8 1697.9 920.5 1700.0 922.3 C1704.1 925.9 1710.8 931.8 1715.8 932.3 C1720.8 932.8 1728.1 927.8 1733.3 925.6 C1738.4 923.5 1744.8 919.7 1750.0 918.0 C1753.6 916.8 1758.9 916.7 1762.7 916.1 C1766.5 915.5 1771.5 914.3 1775.3 914.2 C1776.9 914.1 1779.3 914.5 1780.4 915.5 C1782.9 917.9 1785.3 924.6 1787.4 925.6 C1788.4 926.1 1790.0 922.2 1790.6 920.6 C1791.3 918.8 1790.6 915.4 1791.8 914.2 C1793.3 912.7 1797.3 912.8 1799.4 911.7 C1801.5 910.7 1803.9 907.4 1805.8 907.2 C1807.3 907.0 1809.5 909.2 1810.8 910.4 C1814.0 913.2 1818.3 917.3 1821.0 920.6 C1822.1 921.9 1822.5 925.2 1823.5 925.6 C1824.2 925.9 1826.2 924.2 1826.7 923.1 C1827.8 920.7 1826.9 915.6 1828.6 914.2 C1830.5 912.6 1835.8 913.7 1838.7 913.0 C1841.8 912.2 1845.8 909.6 1848.9 909.2 C1850.8 909.0 1853.5 910.2 1855.2 911.1 C1859.2 913.2 1864.1 918.9 1867.9 919.3 C1870.5 919.6 1873.8 914.6 1876.7 913.6 C1879.1 912.8 1882.9 913.2 1885.6 913.2 C1889.8 913.3 1895.4 914.0 1899.6 914.0 C1929.8 914.3 1970.1 914.4 2000.3 914.5" fill="none" stroke="#ff6384" stroke-width="2.8" stroke-linejoin="round" stroke-linecap="butt"/>
<line x1="694.30" y1="1299.50" x2="2000.30" y2="1299.50" stroke="#e4e4e4" stroke-width="1.4"/>
<text x="689.80" y="1302.70" font-size="16.8" fill="#666" text-anchor="end">10</text>
<line x1="694.30" y1="1347.67" x2="2000.30" y2="1347.67" stroke="#e4e4e4" stroke-width="1.4"/>
<text x="689.80" y="1350.88" font-size="16.8" fill="#666" text-anchor="end">5</text>
<line x1="694.30" y1="1395.85" x2="2000.30" y2="1395.85" stroke="#e4e4e4" stroke-width="1.4"/>
<text x="689.80" y="1399.05" font-size="16.8" fill="#666" text-anchor="end">0</text>
<line x1="694.30" y1="1444.03" x2="2000.30" y2="1444.03" stroke="#e4e4e4" stroke-width="1.4"/>
<text x="689.80" y="1447.23" font-size="16.8" fill="#666" text-anchor="end">-5</text>
<line x1="694.30" y1="1492.20" x2="2000.30" y2="1492.20" stroke="#e4e4e4" stroke-width="1.4"/>
<text x="689.80" y="1495.40" font-size="16.8" fill="#666" text-anchor="end">-10</text>
<line x1="704.80" y1="1299.50" x2="704.80" y2="1502.70" stroke="#e4e4e4" stroke-width="1.4"/>
<text x="704.80" y="1521.70" font-size="16.8" fill="#666" text-anchor="middle">53.9</text>
<line x1="975.53" y1="1299.50" x2="975.53" y2="1502.70" stroke="#e4e4e4" stroke-width="1.4"/>
<text x="975.53" y="1521.70" font-size="16.8" fill="#666" text-anchor="middle">56</text>
<line x1="1234.61" y1="1299.50" x2="1234.61" y2="1502.70" stroke="#e4e4e4" stroke-width="1.4"/>
<text x="1234.61" y="1521.70" font-size="16.8" fill="#666" text-anchor="middle">58</text>
<line x1="1493.68" y1="1299.50" x2="1493.68" y2="1502.70" stroke="#e4e4e4" stroke-width="1.4"/>
<text x="1493.68" y="1521.70" font-size="16.8" fill="#666" text-anchor="middle">60</text>
<line x1="1752.75" y1="1299.50" x2="1752.75" y2="1502.70" stroke="#e4e4e4" stroke-width="1.4"/>
<text x="1752.75" y="1521.70" font-size="16.8" fill="#666" text-anchor="middle">62</text>
<line x1="2000.30" y1="1299.50" x2="2000.30" y2="1502.70" stroke="#e4e4e4" stroke-width="1.4"/>
<text x="2000.30" y="1521.70" font-size="16.8" fill="#666" text-anchor="middle">63.9</text>
<line x1="704.80" y1="1299.50" x2="704.80" y2="1502.70" stroke="#d2d2d2" stroke-width="1.4"/>
<line x1="694.30" y1="1492.20" x2="2000.30" y2="1492.20" stroke="#d2d2d2" stroke-width="1.4"/>
<text x="1352.55" y="1551.00" font-size="16.8" fill="#666" text-anchor="middle">Time (s)</text>
<text transform="translate(648.8 1395.85) rotate(-90)" x="0" y="0" font-size="16.4" fill="#666" text-anchor="middle">Torque (Nm)</text>
<path d="M706.1 1397.2 C726.4 1397.2 753.5 1397.8 773.7 1397.2 C775.9 1397.1 778.6 1395.8 780.7 1395.1 C782.3 1394.5 784.8 1393.9 786.0 1392.8 C787.2 1391.6 787.4 1388.6 788.6 1387.5 C790.0 1386.3 792.9 1385.8 794.7 1385.4 C795.2 1385.3 796.2 1385.4 796.5 1385.8 C797.3 1386.8 797.1 1389.6 798.2 1390.2 C800.3 1391.2 804.4 1390.5 807.0 1391.1 C809.2 1391.6 811.9 1392.9 814.0 1393.7 C816.7 1394.8 820.1 1397.0 822.8 1397.5 C824.8 1397.9 827.7 1397.0 829.8 1396.8 C831.9 1396.6 834.7 1396.1 836.8 1396.0 C838.9 1395.9 842.0 1395.5 843.9 1396.3 C846.2 1397.2 849.5 1399.4 850.9 1401.6 C855.8 1409.4 860.0 1421.7 864.9 1429.6 C867.9 1434.4 873.1 1441.2 877.2 1444.0 C878.4 1444.9 881.7 1443.3 882.5 1441.9 C885.4 1436.9 886.9 1428.1 889.5 1422.6 C890.6 1420.2 893.4 1417.9 894.7 1415.6 C897.1 1411.3 898.8 1404.2 901.8 1400.7 C903.5 1398.7 907.8 1397.8 910.5 1397.2 C915.7 1396.0 922.8 1394.6 928.1 1394.6 C933.4 1394.6 941.2 1395.0 945.6 1397.2 C948.6 1398.7 950.8 1403.7 952.6 1406.8 C956.1 1412.9 959.8 1421.7 963.2 1427.9 C965.1 1431.4 967.6 1436.3 970.2 1439.3 C972.9 1442.4 977.7 1448.2 980.7 1448.1 C983.5 1448.0 987.7 1441.8 989.5 1438.4 C992.5 1432.6 993.9 1423.5 996.5 1417.4 C998.1 1413.5 1000.6 1407.9 1003.5 1405.1 C1005.4 1403.2 1009.7 1403.0 1012.3 1401.9 C1016.0 1400.3 1020.8 1397.4 1024.6 1396.3 C1027.6 1395.4 1032.2 1394.6 1035.1 1395.4 C1038.0 1396.2 1042.2 1399.0 1043.9 1401.6 C1046.9 1406.1 1048.4 1414.1 1050.9 1419.1 C1052.9 1423.0 1056.2 1427.9 1058.8 1431.4 C1062.0 1435.7 1066.6 1441.2 1070.0 1445.4 C1071.1 1446.8 1072.5 1448.8 1073.8 1450.1 C1074.9 1451.3 1076.6 1453.2 1077.9 1453.6 C1078.5 1453.8 1079.4 1452.1 1080.1 1452.0 C1080.8 1451.9 1082.0 1452.9 1082.7 1452.7 C1083.5 1452.5 1084.4 1450.9 1085.2 1450.8 C1086.1 1450.6 1087.6 1451.9 1088.4 1451.7 C1089.1 1451.6 1089.7 1449.6 1090.3 1449.8 C1091.5 1450.2 1093.0 1453.2 1094.4 1453.6 C1095.3 1453.9 1097.0 1451.6 1097.9 1452.0 C1099.5 1452.7 1101.0 1456.3 1102.6 1457.1 C1103.3 1457.5 1104.8 1455.4 1105.5 1455.8 C1106.8 1456.5 1108.0 1459.8 1109.3 1460.6 C1109.9 1460.9 1111.2 1459.3 1111.8 1459.6 C1113.0 1460.2 1114.1 1463.5 1115.3 1463.8 C1116.2 1464.0 1117.8 1461.0 1118.8 1461.2 C1120.1 1461.5 1121.6 1465.4 1122.9 1465.7 C1123.7 1465.9 1125.0 1462.6 1125.8 1462.8 C1127.2 1463.2 1129.0 1467.4 1130.5 1467.9 C1131.4 1468.2 1132.8 1465.5 1134.0 1465.3 C1136.3 1464.9 1139.8 1465.5 1142.2 1466.0 C1143.2 1466.2 1144.2 1467.7 1145.1 1467.6 C1146.9 1467.4 1149.2 1465.3 1151.1 1465.0 C1153.3 1464.6 1156.4 1465.0 1158.7 1465.3 C1160.6 1465.5 1163.3 1466.0 1165.1 1466.6 C1165.9 1466.9 1166.8 1467.8 1167.6 1468.2 C1169.5 1469.2 1172.1 1471.2 1173.9 1471.4 C1174.9 1471.5 1176.0 1469.3 1177.1 1469.2 C1179.4 1469.0 1183.4 1469.3 1185.3 1470.4 C1186.7 1471.2 1186.8 1475.1 1187.9 1475.8 C1188.7 1476.3 1190.6 1474.0 1191.7 1474.2 C1192.9 1474.4 1194.2 1476.9 1195.5 1477.1 C1196.7 1477.3 1198.6 1476.0 1200.0 1475.8 C1201.1 1475.6 1203.0 1475.2 1203.8 1475.7 C1205.0 1476.4 1205.4 1479.4 1206.7 1480.1 C1208.3 1481.0 1211.3 1481.3 1213.3 1481.2 C1215.1 1481.1 1217.5 1479.5 1219.1 1479.7 C1220.1 1479.8 1221.0 1482.3 1222.0 1482.3 C1223.5 1482.2 1225.7 1479.5 1227.2 1479.4 C1228.3 1479.3 1229.7 1481.6 1230.8 1481.6 C1231.9 1481.6 1233.3 1479.7 1234.5 1479.7 C1237.9 1479.6 1242.7 1481.3 1246.2 1481.2 C1248.2 1481.2 1250.8 1479.4 1252.7 1479.4 C1254.5 1479.4 1256.8 1481.2 1258.6 1481.2 C1260.8 1481.2 1263.7 1479.6 1265.9 1479.7 C1268.7 1479.8 1272.6 1481.6 1275.4 1481.6 C1277.4 1481.6 1280.0 1479.7 1282.0 1479.7 C1283.6 1479.7 1285.6 1481.6 1287.1 1481.6 C1288.2 1481.6 1289.7 1479.7 1290.8 1479.7 C1292.3 1479.8 1294.4 1481.8 1295.9 1481.9 C1297.2 1482.0 1299.0 1480.1 1300.3 1480.1 C1301.4 1480.1 1303.0 1481.7 1303.9 1481.6 C1304.7 1481.5 1305.2 1479.3 1306.1 1479.2 C1309.8 1478.7 1315.4 1479.0 1319.3 1479.4 C1320.7 1479.6 1322.4 1481.2 1323.7 1481.2 C1325.2 1481.2 1327.9 1480.6 1328.8 1479.4 C1330.7 1477.1 1331.4 1471.8 1333.2 1469.5 C1333.8 1468.7 1336.0 1469.7 1336.8 1469.1 C1338.4 1467.8 1340.0 1464.8 1341.2 1462.9 C1341.7 1462.1 1342.3 1460.9 1342.7 1460.0 C1343.4 1458.3 1343.8 1455.8 1344.7 1454.2 C1347.6 1448.8 1351.8 1441.7 1355.3 1436.7 C1358.1 1432.8 1362.4 1427.8 1365.8 1424.4 C1370.8 1419.4 1377.4 1412.3 1383.3 1408.6 C1387.9 1405.7 1395.7 1404.5 1400.9 1402.5 C1403.9 1401.4 1407.5 1399.0 1410.5 1398.1 C1415.1 1396.7 1421.6 1395.8 1426.3 1394.6 C1430.0 1393.7 1434.9 1392.2 1438.6 1391.1 C1442.8 1389.9 1448.6 1387.3 1452.6 1387.0 C1453.8 1386.9 1454.8 1389.6 1456.1 1389.8 C1462.2 1390.7 1471.1 1389.7 1477.2 1390.7 C1479.5 1391.1 1482.0 1393.8 1484.2 1394.6 C1487.2 1395.6 1491.6 1396.8 1494.7 1396.7 C1497.9 1396.6 1502.1 1394.4 1505.3 1394.2 C1513.6 1393.7 1525.0 1393.7 1533.3 1394.6 C1538.1 1395.1 1544.4 1397.5 1549.1 1398.9 C1553.4 1400.1 1559.5 1401.1 1563.2 1403.3 C1566.3 1405.1 1569.1 1409.6 1571.9 1412.1 C1574.4 1414.4 1578.3 1416.7 1580.7 1419.1 C1584.1 1422.5 1588.3 1427.5 1591.3 1431.3 C1592.0 1432.2 1592.3 1434.0 1593.2 1434.8 C1596.7 1438.1 1601.8 1442.1 1605.8 1444.9 C1608.5 1446.8 1612.5 1448.7 1615.3 1450.3 C1617.6 1451.6 1620.7 1453.4 1623.0 1454.7 C1625.5 1456.1 1628.6 1458.4 1631.2 1459.5 C1632.1 1459.9 1633.6 1459.1 1634.4 1459.5 C1635.3 1460.0 1636.0 1462.3 1636.9 1462.6 C1637.5 1462.8 1638.7 1461.3 1639.4 1461.4 C1640.4 1461.6 1641.6 1463.5 1642.6 1463.6 C1643.5 1463.7 1645.2 1461.9 1645.8 1462.3 C1646.6 1462.9 1646.3 1466.4 1647.0 1466.8 C1647.6 1467.1 1649.4 1464.6 1650.2 1464.9 C1651.4 1465.4 1652.3 1469.2 1653.4 1469.6 C1654.2 1469.9 1655.7 1466.9 1656.5 1467.1 C1657.6 1467.4 1658.7 1471.4 1659.7 1471.5 C1660.6 1471.6 1661.9 1467.8 1662.9 1468.0 C1664.4 1468.3 1666.3 1472.7 1667.9 1473.4 C1668.7 1473.8 1670.2 1471.3 1671.1 1471.5 C1673.2 1472.0 1676.0 1475.2 1678.1 1475.9 C1678.8 1476.1 1680.0 1474.4 1680.6 1474.7 C1681.9 1475.3 1683.2 1478.9 1684.4 1478.8 C1686.0 1478.6 1688.1 1474.7 1690.1 1473.7 C1691.6 1473.0 1694.9 1474.3 1695.8 1473.1 C1697.6 1470.7 1697.8 1465.0 1699.0 1461.7 C1700.3 1458.0 1702.3 1453.1 1704.1 1449.6 C1704.8 1448.3 1706.5 1447.1 1707.2 1445.8 C1708.4 1443.5 1709.4 1440.0 1710.4 1437.6 C1711.3 1435.3 1712.7 1432.3 1713.6 1430.0 C1715.8 1424.6 1717.6 1416.5 1721.0 1412.1 C1723.5 1408.8 1729.5 1406.4 1733.3 1404.2 C1735.8 1402.7 1739.6 1401.3 1742.1 1399.8 C1742.8 1399.4 1743.2 1397.8 1743.9 1397.7 C1745.5 1397.5 1748.2 1398.7 1750.0 1398.7 C1754.5 1398.7 1760.6 1398.0 1765.2 1397.8 C1767.5 1397.7 1770.5 1397.4 1772.8 1397.6 C1774.7 1397.8 1777.6 1399.5 1779.2 1399.0 C1780.7 1398.5 1782.3 1395.9 1783.0 1394.2 C1784.9 1389.5 1786.3 1378.4 1788.0 1377.7 C1789.3 1377.1 1791.0 1386.6 1793.1 1389.8 C1794.4 1391.8 1797.9 1393.0 1799.4 1394.9 C1802.2 1398.4 1804.9 1407.4 1807.7 1407.5 C1810.6 1407.6 1816.0 1399.6 1818.4 1395.5 C1821.1 1390.9 1822.8 1379.3 1824.8 1378.4 C1826.2 1377.8 1827.4 1387.9 1829.8 1390.4 C1831.5 1392.2 1836.2 1391.7 1838.7 1392.7 C1840.4 1393.4 1842.4 1394.9 1843.8 1396.1 C1846.2 1398.2 1848.8 1402.8 1851.4 1403.7 C1853.0 1404.3 1856.0 1402.3 1857.7 1401.2 C1859.8 1399.8 1862.4 1397.4 1864.1 1395.5 C1865.8 1393.6 1867.3 1389.3 1869.1 1388.5 C1870.3 1388.0 1872.8 1390.2 1874.2 1391.1 C1875.8 1392.1 1877.6 1394.1 1879.3 1394.9 C1881.4 1395.8 1884.6 1396.7 1886.9 1396.8 C1891.4 1396.9 1897.5 1395.6 1902.1 1395.5 C1931.5 1395.2 1970.8 1395.5 2000.3 1395.5 L2000.3 1395.8 L706.1 1395.8 Z" fill="rgba(255,206,86,0.2)" stroke="none"/>
<path d="M706.1 1397.2 C726.4 1397.2 753.5 1397.8 773.7 1397.2 C775.9 1397.1 778.6 1395.8 780.7 1395.1 C782.3 1394.5 784.8 1393.9 786.0 1392.8 C787.2 1391.6 787.4 1388.6 788.6 1387.5 C790.0 1386.3 792.9 1385.8 794.7 1385.4 C795.2 1385.3 796.2 1385.4 796.5 1385.8 C797.3 1386.8 797.1 1389.6 798.2 1390.2 C800.3 1391.2 804.4 1390.5 807.0 1391.1 C809.2 1391.6 811.9 1392.9 814.0 1393.7 C816.7 1394.8 820.1 1397.0 822.8 1397.5 C824.8 1397.9 827.7 1397.0 829.8 1396.8 C831.9 1396.6 834.7 1396.1 836.8 1396.0 C838.9 1395.9 842.0 1395.5 843.9 1396.3 C846.2 1397.2 849.5 1399.4 850.9 1401.6 C855.8 1409.4 860.0 1421.7 864.9 1429.6 C867.9 1434.4 873.1 1441.2 877.2 1444.0 C878.4 1444.9 881.7 1443.3 882.5 1441.9 C885.4 1436.9 886.9 1428.1 889.5 1422.6 C890.6 1420.2 893.4 1417.9 894.7 1415.6 C897.1 1411.3 898.8 1404.2 901.8 1400.7 C903.5 1398.7 907.8 1397.8 910.5 1397.2 C915.7 1396.0 922.8 1394.6 928.1 1394.6 C933.4 1394.6 941.2 1395.0 945.6 1397.2 C948.6 1398.7 950.8 1403.7 952.6 1406.8 C956.1 1412.9 959.8 1421.7 963.2 1427.9 C965.1 1431.4 967.6 1436.3 970.2 1439.3 C972.9 1442.4 977.7 1448.2 980.7 1448.1 C983.5 1448.0 987.7 1441.8 989.5 1438.4 C992.5 1432.6 993.9 1423.5 996.5 1417.4 C998.1 1413.5 1000.6 1407.9 1003.5 1405.1 C1005.4 1403.2 1009.7 1403.0 1012.3 1401.9 C1016.0 1400.3 1020.8 1397.4 1024.6 1396.3 C1027.6 1395.4 1032.2 1394.6 1035.1 1395.4 C1038.0 1396.2 1042.2 1399.0 1043.9 1401.6 C1046.9 1406.1 1048.4 1414.1 1050.9 1419.1 C1052.9 1423.0 1056.2 1427.9 1058.8 1431.4 C1062.0 1435.7 1066.6 1441.2 1070.0 1445.4 C1071.1 1446.8 1072.5 1448.8 1073.8 1450.1 C1074.9 1451.3 1076.6 1453.2 1077.9 1453.6 C1078.5 1453.8 1079.4 1452.1 1080.1 1452.0 C1080.8 1451.9 1082.0 1452.9 1082.7 1452.7 C1083.5 1452.5 1084.4 1450.9 1085.2 1450.8 C1086.1 1450.6 1087.6 1451.9 1088.4 1451.7 C1089.1 1451.6 1089.7 1449.6 1090.3 1449.8 C1091.5 1450.2 1093.0 1453.2 1094.4 1453.6 C1095.3 1453.9 1097.0 1451.6 1097.9 1452.0 C1099.5 1452.7 1101.0 1456.3 1102.6 1457.1 C1103.3 1457.5 1104.8 1455.4 1105.5 1455.8 C1106.8 1456.5 1108.0 1459.8 1109.3 1460.6 C1109.9 1460.9 1111.2 1459.3 1111.8 1459.6 C1113.0 1460.2 1114.1 1463.5 1115.3 1463.8 C1116.2 1464.0 1117.8 1461.0 1118.8 1461.2 C1120.1 1461.5 1121.6 1465.4 1122.9 1465.7 C1123.7 1465.9 1125.0 1462.6 1125.8 1462.8 C1127.2 1463.2 1129.0 1467.4 1130.5 1467.9 C1131.4 1468.2 1132.8 1465.5 1134.0 1465.3 C1136.3 1464.9 1139.8 1465.5 1142.2 1466.0 C1143.2 1466.2 1144.2 1467.7 1145.1 1467.6 C1146.9 1467.4 1149.2 1465.3 1151.1 1465.0 C1153.3 1464.6 1156.4 1465.0 1158.7 1465.3 C1160.6 1465.5 1163.3 1466.0 1165.1 1466.6 C1165.9 1466.9 1166.8 1467.8 1167.6 1468.2 C1169.5 1469.2 1172.1 1471.2 1173.9 1471.4 C1174.9 1471.5 1176.0 1469.3 1177.1 1469.2 C1179.4 1469.0 1183.4 1469.3 1185.3 1470.4 C1186.7 1471.2 1186.8 1475.1 1187.9 1475.8 C1188.7 1476.3 1190.6 1474.0 1191.7 1474.2 C1192.9 1474.4 1194.2 1476.9 1195.5 1477.1 C1196.7 1477.3 1198.6 1476.0 1200.0 1475.8 C1201.1 1475.6 1203.0 1475.2 1203.8 1475.7 C1205.0 1476.4 1205.4 1479.4 1206.7 1480.1 C1208.3 1481.0 1211.3 1481.3 1213.3 1481.2 C1215.1 1481.1 1217.5 1479.5 1219.1 1479.7 C1220.1 1479.8 1221.0 1482.3 1222.0 1482.3 C1223.5 1482.2 1225.7 1479.5 1227.2 1479.4 C1228.3 1479.3 1229.7 1481.6 1230.8 1481.6 C1231.9 1481.6 1233.3 1479.7 1234.5 1479.7 C1237.9 1479.6 1242.7 1481.3 1246.2 1481.2 C1248.2 1481.2 1250.8 1479.4 1252.7 1479.4 C1254.5 1479.4 1256.8 1481.2 1258.6 1481.2 C1260.8 1481.2 1263.7 1479.6 1265.9 1479.7 C1268.7 1479.8 1272.6 1481.6 1275.4 1481.6 C1277.4 1481.6 1280.0 1479.7 1282.0 1479.7 C1283.6 1479.7 1285.6 1481.6 1287.1 1481.6 C1288.2 1481.6 1289.7 1479.7 1290.8 1479.7 C1292.3 1479.8 1294.4 1481.8 1295.9 1481.9 C1297.2 1482.0 1299.0 1480.1 1300.3 1480.1 C1301.4 1480.1 1303.0 1481.7 1303.9 1481.6 C1304.7 1481.5 1305.2 1479.3 1306.1 1479.2 C1309.8 1478.7 1315.4 1479.0 1319.3 1479.4 C1320.7 1479.6 1322.4 1481.2 1323.7 1481.2 C1325.2 1481.2 1327.9 1480.6 1328.8 1479.4 C1330.7 1477.1 1331.4 1471.8 1333.2 1469.5 C1333.8 1468.7 1336.0 1469.7 1336.8 1469.1 C1338.4 1467.8 1340.0 1464.8 1341.2 1462.9 C1341.7 1462.1 1342.3 1460.9 1342.7 1460.0 C1343.4 1458.3 1343.8 1455.8 1344.7 1454.2 C1347.6 1448.8 1351.8 1441.7 1355.3 1436.7 C1358.1 1432.8 1362.4 1427.8 1365.8 1424.4 C1370.8 1419.4 1377.4 1412.3 1383.3 1408.6 C1387.9 1405.7 1395.7 1404.5 1400.9 1402.5 C1403.9 1401.4 1407.5 1399.0 1410.5 1398.1 C1415.1 1396.7 1421.6 1395.8 1426.3 1394.6 C1430.0 1393.7 1434.9 1392.2 1438.6 1391.1 C1442.8 1389.9 1448.6 1387.3 1452.6 1387.0 C1453.8 1386.9 1454.8 1389.6 1456.1 1389.8 C1462.2 1390.7 1471.1 1389.7 1477.2 1390.7 C1479.5 1391.1 1482.0 1393.8 1484.2 1394.6 C1487.2 1395.6 1491.6 1396.8 1494.7 1396.7 C1497.9 1396.6 1502.1 1394.4 1505.3 1394.2 C1513.6 1393.7 1525.0 1393.7 1533.3 1394.6 C1538.1 1395.1 1544.4 1397.5 1549.1 1398.9 C1553.4 1400.1 1559.5 1401.1 1563.2 1403.3 C1566.3 1405.1 1569.1 1409.6 1571.9 1412.1 C1574.4 1414.4 1578.3 1416.7 1580.7 1419.1 C1584.1 1422.5 1588.3 1427.5 1591.3 1431.3 C1592.0 1432.2 1592.3 1434.0 1593.2 1434.8 C1596.7 1438.1 1601.8 1442.1 1605.8 1444.9 C1608.5 1446.8 1612.5 1448.7 1615.3 1450.3 C1617.6 1451.6 1620.7 1453.4 1623.0 1454.7 C1625.5 1456.1 1628.6 1458.4 1631.2 1459.5 C1632.1 1459.9 1633.6 1459.1 1634.4 1459.5 C1635.3 1460.0 1636.0 1462.3 1636.9 1462.6 C1637.5 1462.8 1638.7 1461.3 1639.4 1461.4 C1640.4 1461.6 1641.6 1463.5 1642.6 1463.6 C1643.5 1463.7 1645.2 1461.9 1645.8 1462.3 C1646.6 1462.9 1646.3 1466.4 1647.0 1466.8 C1647.6 1467.1 1649.4 1464.6 1650.2 1464.9 C1651.4 1465.4 1652.3 1469.2 1653.4 1469.6 C1654.2 1469.9 1655.7 1466.9 1656.5 1467.1 C1657.6 1467.4 1658.7 1471.4 1659.7 1471.5 C1660.6 1471.6 1661.9 1467.8 1662.9 1468.0 C1664.4 1468.3 1666.3 1472.7 1667.9 1473.4 C1668.7 1473.8 1670.2 1471.3 1671.1 1471.5 C1673.2 1472.0 1676.0 1475.2 1678.1 1475.9 C1678.8 1476.1 1680.0 1474.4 1680.6 1474.7 C1681.9 1475.3 1683.2 1478.9 1684.4 1478.8 C1686.0 1478.6 1688.1 1474.7 1690.1 1473.7 C1691.6 1473.0 1694.9 1474.3 1695.8 1473.1 C1697.6 1470.7 1697.8 1465.0 1699.0 1461.7 C1700.3 1458.0 1702.3 1453.1 1704.1 1449.6 C1704.8 1448.3 1706.5 1447.1 1707.2 1445.8 C1708.4 1443.5 1709.4 1440.0 1710.4 1437.6 C1711.3 1435.3 1712.7 1432.3 1713.6 1430.0 C1715.8 1424.6 1717.6 1416.5 1721.0 1412.1 C1723.5 1408.8 1729.5 1406.4 1733.3 1404.2 C1735.8 1402.7 1739.6 1401.3 1742.1 1399.8 C1742.8 1399.4 1743.2 1397.8 1743.9 1397.7 C1745.5 1397.5 1748.2 1398.7 1750.0 1398.7 C1754.5 1398.7 1760.6 1398.0 1765.2 1397.8 C1767.5 1397.7 1770.5 1397.4 1772.8 1397.6 C1774.7 1397.8 1777.6 1399.5 1779.2 1399.0 C1780.7 1398.5 1782.3 1395.9 1783.0 1394.2 C1784.9 1389.5 1786.3 1378.4 1788.0 1377.7 C1789.3 1377.1 1791.0 1386.6 1793.1 1389.8 C1794.4 1391.8 1797.9 1393.0 1799.4 1394.9 C1802.2 1398.4 1804.9 1407.4 1807.7 1407.5 C1810.6 1407.6 1816.0 1399.6 1818.4 1395.5 C1821.1 1390.9 1822.8 1379.3 1824.8 1378.4 C1826.2 1377.8 1827.4 1387.9 1829.8 1390.4 C1831.5 1392.2 1836.2 1391.7 1838.7 1392.7 C1840.4 1393.4 1842.4 1394.9 1843.8 1396.1 C1846.2 1398.2 1848.8 1402.8 1851.4 1403.7 C1853.0 1404.3 1856.0 1402.3 1857.7 1401.2 C1859.8 1399.8 1862.4 1397.4 1864.1 1395.5 C1865.8 1393.6 1867.3 1389.3 1869.1 1388.5 C1870.3 1388.0 1872.8 1390.2 1874.2 1391.1 C1875.8 1392.1 1877.6 1394.1 1879.3 1394.9 C1881.4 1395.8 1884.6 1396.7 1886.9 1396.8 C1891.4 1396.9 1897.5 1395.6 1902.1 1395.5 C1931.5 1395.2 1970.8 1395.5 2000.3 1395.5" fill="none" stroke="#ffce56" stroke-width="2.8" stroke-linejoin="round" stroke-linecap="butt"/>
</svg>
</body></html>
